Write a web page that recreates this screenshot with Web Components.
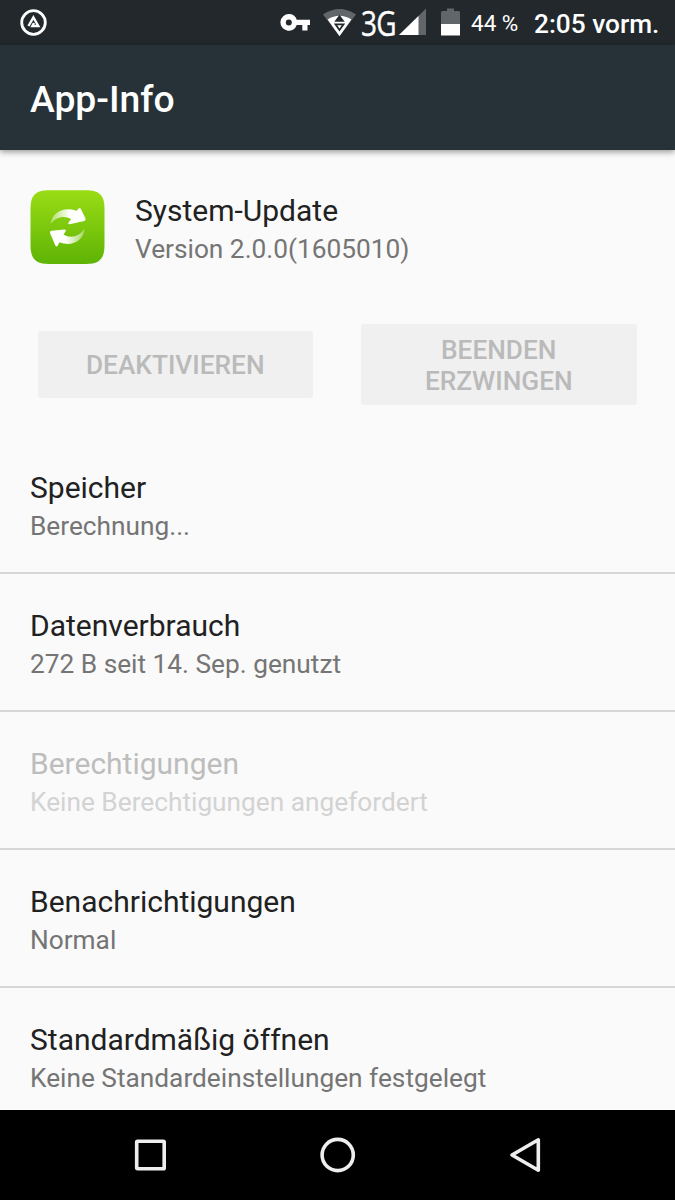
<!DOCTYPE html>
<html lang="de">
<head>
<meta charset="utf-8">
<title>App-Info</title>
<style>
  html, body {
    margin: 0;
    height: 1200px;
    overflow: hidden;
  }

  body {
    font-family: Roboto, "Liberation Sans", sans-serif;
    background: #fafafa;
  }
</style>
</head>
<body>
<app-screen>
  <status-bar slot="status" network="3G" battery="44 %" time="2:05 vorm."></status-bar>
  <tool-bar slot="toolbar">App-Info</tool-bar>

  <app-header>
    <span slot="name">System-Update</span>
    <span slot="version">Version 2.0.0(1605010)</span>
  </app-header>
  <button-row>
    <flat-button>Deaktivieren</flat-button>
    <flat-button>Beenden<br>erzwingen</flat-button>
  </button-row>

  <pref-item>Speicher<span slot="summary">Berechnung...</span></pref-item>
  <pref-item>Datenverbrauch<span slot="summary">272 B seit 14. Sep. genutzt</span></pref-item>
  <pref-item disabled>Berechtigungen<span slot="summary">Keine Berechtigungen angefordert</span></pref-item>
  <pref-item>Benachrichtigungen<span slot="summary">Normal</span></pref-item>
  <pref-item>Standardmäßig öffnen<span slot="summary">Keine Standardeinstellungen festgelegt</span></pref-item>

  <nav-bar slot="nav"></nav-bar>
</app-screen>

<script>
class BaseElement extends HTMLElement {
  constructor() {
    super();
    let shadow = this.attachShadow({ mode: "open" });
    shadow.innerHTML = `<style>${this.constructor.style}</style>${this.constructor.content}`;
  }
}

class AppScreen extends BaseElement {
  static get style() {
    return `
      :host {
        display: flex;
        flex-direction: column;
        width: 675px;
        height: 1200px;
      }

      main {
        flex: 1;
        min-height: 0;
        overflow: hidden;
      }
    `;
  }

  static get content() {
    return `
      <slot name="status"></slot>
      <slot name="toolbar"></slot>
      <main><slot></slot></main>
      <slot name="nav"></slot>
    `;
  }
}

class StatusBar extends BaseElement {
  static get style() {
    return `
      :host {
        display: flex;
        align-items: center;
        box-sizing: border-box;
        flex: none;
        height: 45px;
        padding: 0 16px 0 20px;
        background: #22282c;
        color: #fff;
        white-space: nowrap;
      }

      svg {
        display: block;
        flex: none;
      }

      .spacer {
        flex: 1;
      }

      .wifi {
        margin-left: 13px;
      }

      .network {
        width: 36px;
        margin-left: 5px;
        font: 35px/45px "Open Sans", sans-serif;
        letter-spacing: -1px;
        -webkit-text-stroke: .4px #fff;
      }

      .network span {
        display: inline-block;
        transform: scaleX(.8);
        transform-origin: 0 50%;
      }

      .signal {
        margin-left: 2px;
      }

      .battery {
        margin-left: 15px;
      }

      .level {
        width: 47px;
        margin-left: 11px;
        padding-top: 2px;
        font-size: 22.5px;
        line-height: 43px;
      }

      .time {
        width: 125px;
        margin-left: 16px;
        padding-top: 3px;
        font-size: 26.25px;
        font-weight: 500;
        line-height: 42px;
      }
    `;
  }

  static get content() {
    return `
      <svg width="27" height="45" viewBox="0 0 27 45" fill="none" stroke="#fff">
        <circle cx="13.5" cy="22.5" r="11.8" stroke-width="2.8"/>
        <path d="M8.500 26 13.400 17.500 18.300 26H12.400L14 23" stroke-width="2.4"/>
      </svg>
      <div class="spacer"></div>
      <svg width="30" height="45" viewBox="0 0 30 45">
        <path fill="#fff" fill-rule="evenodd" d="M8.8 14a8.4 8.4 0 0 1 8 5.8H30v5.3h-2.5v5.4h-5.2v-5.4h-5.5A8.4 8.4 0 1 1 8.8 14zm0 5.5a3 3 0 1 0 0 6 3 3 0 0 0 0-6z"/>
      </svg>
      <svg class="wifi" width="33" height="45" viewBox="0 0 33 45">
        <path fill="#61666a" d="M0 14.6Q16.5 3.5 33 14.6L16.5 36z"/>
        <path fill="#fff" d="M4.6 19.5Q16.5 12 28.4 19.5L16.5 36.200z"/>
        <path fill="#22282c" d="M16.5 14.800 21.700 21.700H11.300zM10.800 23.500H22.200L16.500 31.500z"/>
        <path fill="#fff" d="M14.200 25.300H18.800L16.500 28.400z"/>
      </svg>
      <div class="network"><span></span></div>
      <svg class="signal" width="27" height="45" viewBox="0 0 27 45">
        <path fill="#61666a" d="M27 8.500V35H0z"/>
        <path fill="#fff" d="M19.500 15.900V35H0z"/>
      </svg>
      <svg class="battery" width="19" height="45" viewBox="0 0 19 45">
        <path fill="#61666a" d="M6 8.500h7v2.500h4.500q1.500 0 1.500 1.500V24H0V12.500Q0 11 1.500 11H6z"/>
        <path fill="#fff" d="M0 24H19V35.500H0z"/>
      </svg>
      <div class="level"></div>
      <div class="time"></div>
    `;
  }

  connectedCallback() {
    this.shadowRoot.querySelector(".network span").textContent = this.getAttribute("network");
    this.shadowRoot.querySelector(".level").textContent = this.getAttribute("battery");
    this.shadowRoot.querySelector(".time").textContent = this.getAttribute("time");
  }
}

class ToolBar extends BaseElement {
  static get style() {
    return `
      :host {
        display: flex;
        align-items: center;
        box-sizing: border-box;
        flex: none;
        height: 105px;
        padding: 2px 30px 0;
        background: #273238;
        box-shadow: 0 2px 6px rgba(0, 0, 0, .4);
        color: #fff;
        font-size: 37.3px;
        font-weight: 500;
      }
    `;
  }

  static get content() {
    return `<slot></slot>`;
  }
}

class AppHeader extends BaseElement {
  static get style() {
    return `
      :host {
        display: flex;
        gap: 30px;
        height: 75px;
        padding: 40px 30px 58px;
      }

      .text {
        padding-top: 1px;
      }

      .name {
        font-size: 30px;
        line-height: 40px;
        color: #212121;
      }

      .version {
        font-size: 26.25px;
        line-height: 36px;
        color: #757575;
      }
    `;
  }

  static get content() {
    return `
      <svg width="75" height="75" viewBox="0 0 75 75">
        <defs>
          <linearGradient id="tile" x1="0" y1="0" x2="0" y2="1">
            <stop offset="0" stop-color="#9add16"/>
            <stop offset="1" stop-color="#5eb304"/>
          </linearGradient>
          <linearGradient id="top" x1="0" y1="0" x2="1" y2="0">
            <stop offset="0" stop-color="#fff" stop-opacity=".35"/>
            <stop offset=".55" stop-color="#fff"/>
          </linearGradient>
          <linearGradient id="bottom" x1="1" y1="0" x2="0" y2="0">
            <stop offset="0" stop-color="#fff" stop-opacity=".35"/>
            <stop offset=".55" stop-color="#fff"/>
          </linearGradient>
        </defs>
        <path fill="url(#tile)" d="M19 .3H56C69.500 .3 74.500 5.300 74.500 19V55C74.500 68.700 69.500 74 56 74H19C5.500 74 .5 68.700 .5 55V19C.5 5.300 5.500 .3 19 .3z"/>
        <path fill="url(#top)" d="M20.500 34C22 22 34 16.500 45.500 20.500Q47 21 47.600 19.800L48.500 18.500Q50 17 51 19.200L55.500 28.500Q56 30.300 54.300 30.900L39.500 34.300Q37.500 34.400 38.500 32.500L41.200 29C34 25 26 27 20.500 34z"/>
        <path fill="url(#bottom)" d="M54.500 38.500C54 50.500 42 57 30.500 52.500Q29.200 52 28.700 53.500L27.700 55.700Q26.500 57.300 25.200 55.200L20 43Q19.500 41 21.300 40.700L34.500 39.400Q36.500 39.500 35.500 41.500L33.500 44.500C41 49 49.500 46.500 54.500 38.500z"/>
      </svg>
      <div class="text">
        <div class="name"><slot name="name"></slot></div>
        <div class="version"><slot name="version"></slot></div>
      </div>
    `;
  }
}

class ButtonRow extends BaseElement {
  static get style() {
    return `
      :host {
        display: grid;
        grid-template-columns: 1fr 1fr;
        align-items: center;
        gap: 48px;
        height: 82px;
        padding: 0 38.500px 31px 37.500px;
      }
    `;
  }

  static get content() {
    return `<slot></slot>`;
  }
}

class FlatButton extends BaseElement {
  static get style() {
    return `
      :host {
        display: flex;
        align-items: center;
        justify-content: center;
        box-sizing: border-box;
        min-height: 67px;
        padding: 11px 15px 8px;
        border-radius: 3px;
        background: #f0f0f0;
        color: #bababa;
        font-size: 26.25px;
        font-weight: 500;
        line-height: 31px;
        text-align: center;
        text-transform: uppercase;
      }
    `;
  }

  static get content() {
    return `<div><slot></slot></div>`;
  }
}

class PrefItem extends BaseElement {
  static get style() {
    return `
      :host {
        display: block;
        box-sizing: border-box;
        height: 138px;
        padding: 32px 30px 0;
        border-bottom: 2px solid #d7d7d7;
        color: #212121;
      }

      .title {
        font-size: 30px;
        line-height: 40px;
      }

      .summary {
        font-size: 26.25px;
        line-height: 36px;
        color: #757575;
      }

      :host([disabled]) .title {
        color: #bdbdbd;
      }

      :host([disabled]) .summary {
        color: #d3d3d3;
      }
    `;
  }

  static get content() {
    return `
      <div class="title"><slot></slot></div>
      <div class="summary"><slot name="summary"></slot></div>
    `;
  }
}

class NavBar extends BaseElement {
  static get style() {
    return `
      :host {
        display: flex;
        align-items: center;
        justify-content: center;
        gap: 147px;
        flex: none;
        height: 90px;
        background: #000;
      }
    `;
  }

  static get content() {
    return `
      <svg width="40" height="40" viewBox="0 0 40 40" fill="none" stroke="#eee" stroke-width="3.6">
        <rect x="5.700" y="6.300" width="27.500" height="27.500" rx=".8"/>
      </svg>
      <svg width="40" height="40" viewBox="0 0 40 40" fill="none" stroke="#eee" stroke-width="3.6">
        <circle cx="19.700" cy="20" r="15.600"/>
      </svg>
      <svg width="40" height="40" viewBox="0 0 40 40" fill="none" stroke="#eee" stroke-width="3.6" stroke-linejoin="round">
        <path d="M33.300 4.800V35.200L7 20z"/>
      </svg>
    `;
  }
}

customElements.define("app-screen", AppScreen);
customElements.define("status-bar", StatusBar);
customElements.define("tool-bar", ToolBar);
customElements.define("app-header", AppHeader);
customElements.define("button-row", ButtonRow);
customElements.define("flat-button", FlatButton);
customElements.define("pref-item", PrefItem);
customElements.define("nav-bar", NavBar);
</script>
</body>
</html>
